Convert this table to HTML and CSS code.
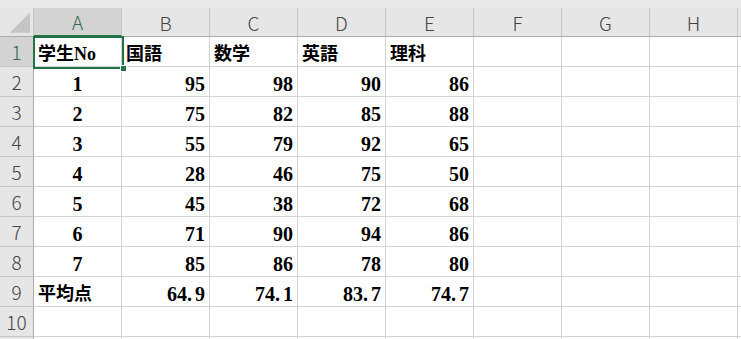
FILE: index.html
```html
<!DOCTYPE html>
<html lang="ja">
<head>
<meta charset="utf-8">
<link rel="stylesheet" href="styles.css">
</head>
<body>
<div class="wrap">
  <div class="strip"></div>
  <div class="sheet">
    <div class="hd corner"><svg width="34" height="29" viewBox="0 0 34 29"><polygon points="31,4 31,25 10,25" fill="#c4c4c4"/></svg></div>
    <div class="hd col active">A</div>
    <div class="hd col">B</div>
    <div class="hd col">C</div>
    <div class="hd col">D</div>
    <div class="hd col">E</div>
    <div class="hd col">F</div>
    <div class="hd col">G</div>
    <div class="hd col">H</div>
    <div class="hd col rest"></div>

    <div class="hd row active">1</div>
    <div class="c t">学生No</div><div class="c t">国語</div><div class="c t">数学</div><div class="c t">英語</div><div class="c t">理科</div><div class="c"></div><div class="c"></div><div class="c"></div><div class="c"></div>

    <div class="hd row">2</div>
    <div class="c m">1</div><div class="c n">95</div><div class="c n">98</div><div class="c n">90</div><div class="c n">86</div><div class="c"></div><div class="c"></div><div class="c"></div><div class="c"></div>

    <div class="hd row">3</div>
    <div class="c m">2</div><div class="c n">75</div><div class="c n">82</div><div class="c n">85</div><div class="c n">88</div><div class="c"></div><div class="c"></div><div class="c"></div><div class="c"></div>

    <div class="hd row">4</div>
    <div class="c m">3</div><div class="c n">55</div><div class="c n">79</div><div class="c n">92</div><div class="c n">65</div><div class="c"></div><div class="c"></div><div class="c"></div><div class="c"></div>

    <div class="hd row">5</div>
    <div class="c m">4</div><div class="c n">28</div><div class="c n">46</div><div class="c n">75</div><div class="c n">50</div><div class="c"></div><div class="c"></div><div class="c"></div><div class="c"></div>

    <div class="hd row">6</div>
    <div class="c m">5</div><div class="c n">45</div><div class="c n">38</div><div class="c n">72</div><div class="c n">68</div><div class="c"></div><div class="c"></div><div class="c"></div><div class="c"></div>

    <div class="hd row">7</div>
    <div class="c m">6</div><div class="c n">71</div><div class="c n">90</div><div class="c n">94</div><div class="c n">86</div><div class="c"></div><div class="c"></div><div class="c"></div><div class="c"></div>

    <div class="hd row">8</div>
    <div class="c m">7</div><div class="c n">85</div><div class="c n">86</div><div class="c n">78</div><div class="c n">80</div><div class="c"></div><div class="c"></div><div class="c"></div><div class="c"></div>

    <div class="hd row">9</div>
    <div class="c t">平均点</div><div class="c n">64<span class="dot">.</span>9</div><div class="c n">74<span class="dot">.</span>1</div><div class="c n">83<span class="dot">.</span>7</div><div class="c n">74<span class="dot">.</span>7</div><div class="c"></div><div class="c"></div><div class="c"></div><div class="c"></div>

    <div class="hd row">10</div>
    <div class="c"></div><div class="c"></div><div class="c"></div><div class="c"></div><div class="c"></div><div class="c"></div><div class="c"></div><div class="c"></div><div class="c"></div>

    <div class="hd row"></div>
    <div class="c"></div><div class="c"></div><div class="c"></div><div class="c"></div><div class="c"></div><div class="c"></div><div class="c"></div><div class="c"></div><div class="c"></div>
  </div>
  <div class="sel"></div>
  <div class="handle"></div>
</div>
</body>
</html>
```
FILE: styles.css
```css
html, body {
  margin: 0;
  padding: 0;
  background: #ffffff;
  overflow: hidden;
}
.wrap {
  position: relative;
  width: 741px;
  height: 339px;
  overflow: hidden;
}
.strip {
  height: 8px;
  background: #e9e9e9;
}
.sheet {
  display: grid;
  grid-template-columns: 34px repeat(8, 88px) 1fr;
  grid-template-rows: 29px;
  grid-auto-rows: 30px;
}
.hd {
  background: #e6e6e6;
  color: #444444;
  font-family: "Noto Sans CJK JP", "Noto Sans", sans-serif;
  font-weight: 300;
  font-size: 19px;
  display: flex;
  align-items: center;
  justify-content: center;
  box-sizing: border-box;
}
.corner {
  border-right: 1px solid #c6c6c6;
  border-bottom: 1px solid #ababab;
  padding: 0;
  align-items: stretch;
}
.corner svg { display: block; }
.col {
  border-right: 1px solid #c6c6c6;
  border-bottom: 1px solid #ababab;
}
.col.rest { border-right: none; }
.row {
  border-right: 1px solid #ababab;
  border-bottom: 1px solid #c6c6c6;
}
.hd.active {
  background: #d3d3d3;
  color: #2f6b4c;
}
.col.active { border-bottom: 2px solid #217346; }
.c {
  box-sizing: border-box;
  border-right: 1px solid #d4d4d4;
  border-bottom: 1px solid #d4d4d4;
  font-family: "Liberation Serif", "Noto Sans CJK JP", serif;
  font-weight: 700;
  font-size: 20px;
  color: #000000;
  display: flex;
  align-items: flex-end;
  padding: 0 4px 0 4px;
  white-space: nowrap;
  line-height: 24px;
}
.t {
  font-size: 18px;
  justify-content: flex-start;
}
.n { justify-content: flex-end; padding-right: 4px; }
.m { justify-content: center; }
.dot { padding-right: 3px; }
.sel {
  position: absolute;
  left: 33px;
  top: 36px;
  width: 91px;
  height: 33px;
  box-sizing: border-box;
  border: 2px solid #217346;
}
.handle {
  position: absolute;
  left: 120px;
  top: 65px;
  width: 5px;
  height: 5px;
  background: #217346;
  border: 1px solid #ffffff;
}
```
